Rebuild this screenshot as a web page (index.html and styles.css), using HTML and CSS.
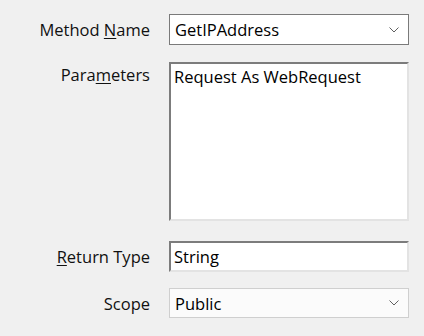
FILE: index.html
```html
<!DOCTYPE html>
<html lang="en">
<head>
    <meta charset="UTF-8">
    <link rel="stylesheet" href="styles.css">
</head>
<body>
<div class="form">
    <div class="row row-method">
        <label class="label">Method <u>N</u>ame</label>
        <div class="combo">
            <span class="value">GetIPAddress</span>
            <svg class="chevron" width="10" height="6" viewBox="0 0 10 6"><path d="M0.5 0.5 L5 5 L9.5 0.5" fill="none" stroke="#606060" stroke-width="1"/></svg>
        </div>
    </div>
    <div class="row row-params">
        <label class="label label-top">Para<u>m</u>eters</label>
        <div class="textarea">Request As WebRequest</div>
    </div>
    <div class="row row-return">
        <label class="label"><u>R</u>eturn Type</label>
        <div class="textbox">String</div>
    </div>
    <div class="row row-scope">
        <label class="label">Scope</label>
        <div class="combo combo-flat">
            <span class="value">Public</span>
            <svg class="chevron" width="10" height="6" viewBox="0 0 10 6"><path d="M0.5 0.5 L5 5 L9.5 0.5" fill="none" stroke="#606060" stroke-width="1"/></svg>
        </div>
    </div>
</div>
</body>
</html>
```
FILE: styles.css
```css
body {
    margin: 0;
    background-color: #f0f0f0;
    font-family: "Open Sans", "Noto Sans", sans-serif;
    font-size: 16.5px;
    color: #000;
}

.form {
    padding-top: 14px;
}

.row {
    display: flex;
    align-items: center;
}

.row-params {
    align-items: flex-start;
    margin-top: 17px;
}

.row-return {
    margin-top: 20px;
}

.row-scope {
    margin-top: 16px;
}

.label {
    width: 150px;
    margin-right: 19px;
    text-align: right;
    color: #111;
}

.label-top {
    padding-top: 1px;
}

u {
    text-underline-offset: 2px;
}

.combo {
    width: 240px;
    height: 31px;
    box-sizing: border-box;
    border: 1px solid #7a7a7a;
    background-color: #fff;
    display: flex;
    align-items: center;
    justify-content: space-between;
    padding: 0 9px 0 5px;
}

.combo-flat {
    height: 30px;
    border-color: #cfcfcf;
    background-color: #fbfbfb;
}

.textarea {
    width: 240px;
    height: 159px;
    box-sizing: border-box;
    border-top: 2px solid #7c7c7c;
    border-left: 2px solid #7c7c7c;
    border-right: 2px solid #e3e3e3;
    border-bottom: 2px solid #e3e3e3;
    background-color: #fff;
    padding: 1px 3px;
}

.textbox {
    width: 240px;
    height: 31px;
    box-sizing: border-box;
    border-top: 2px solid #7c7c7c;
    border-left: 2px solid #7c7c7c;
    border-right: 2px solid #e3e3e3;
    border-bottom: 2px solid #e3e3e3;
    background-color: #fff;
    padding: 2px 3px;
}
```
